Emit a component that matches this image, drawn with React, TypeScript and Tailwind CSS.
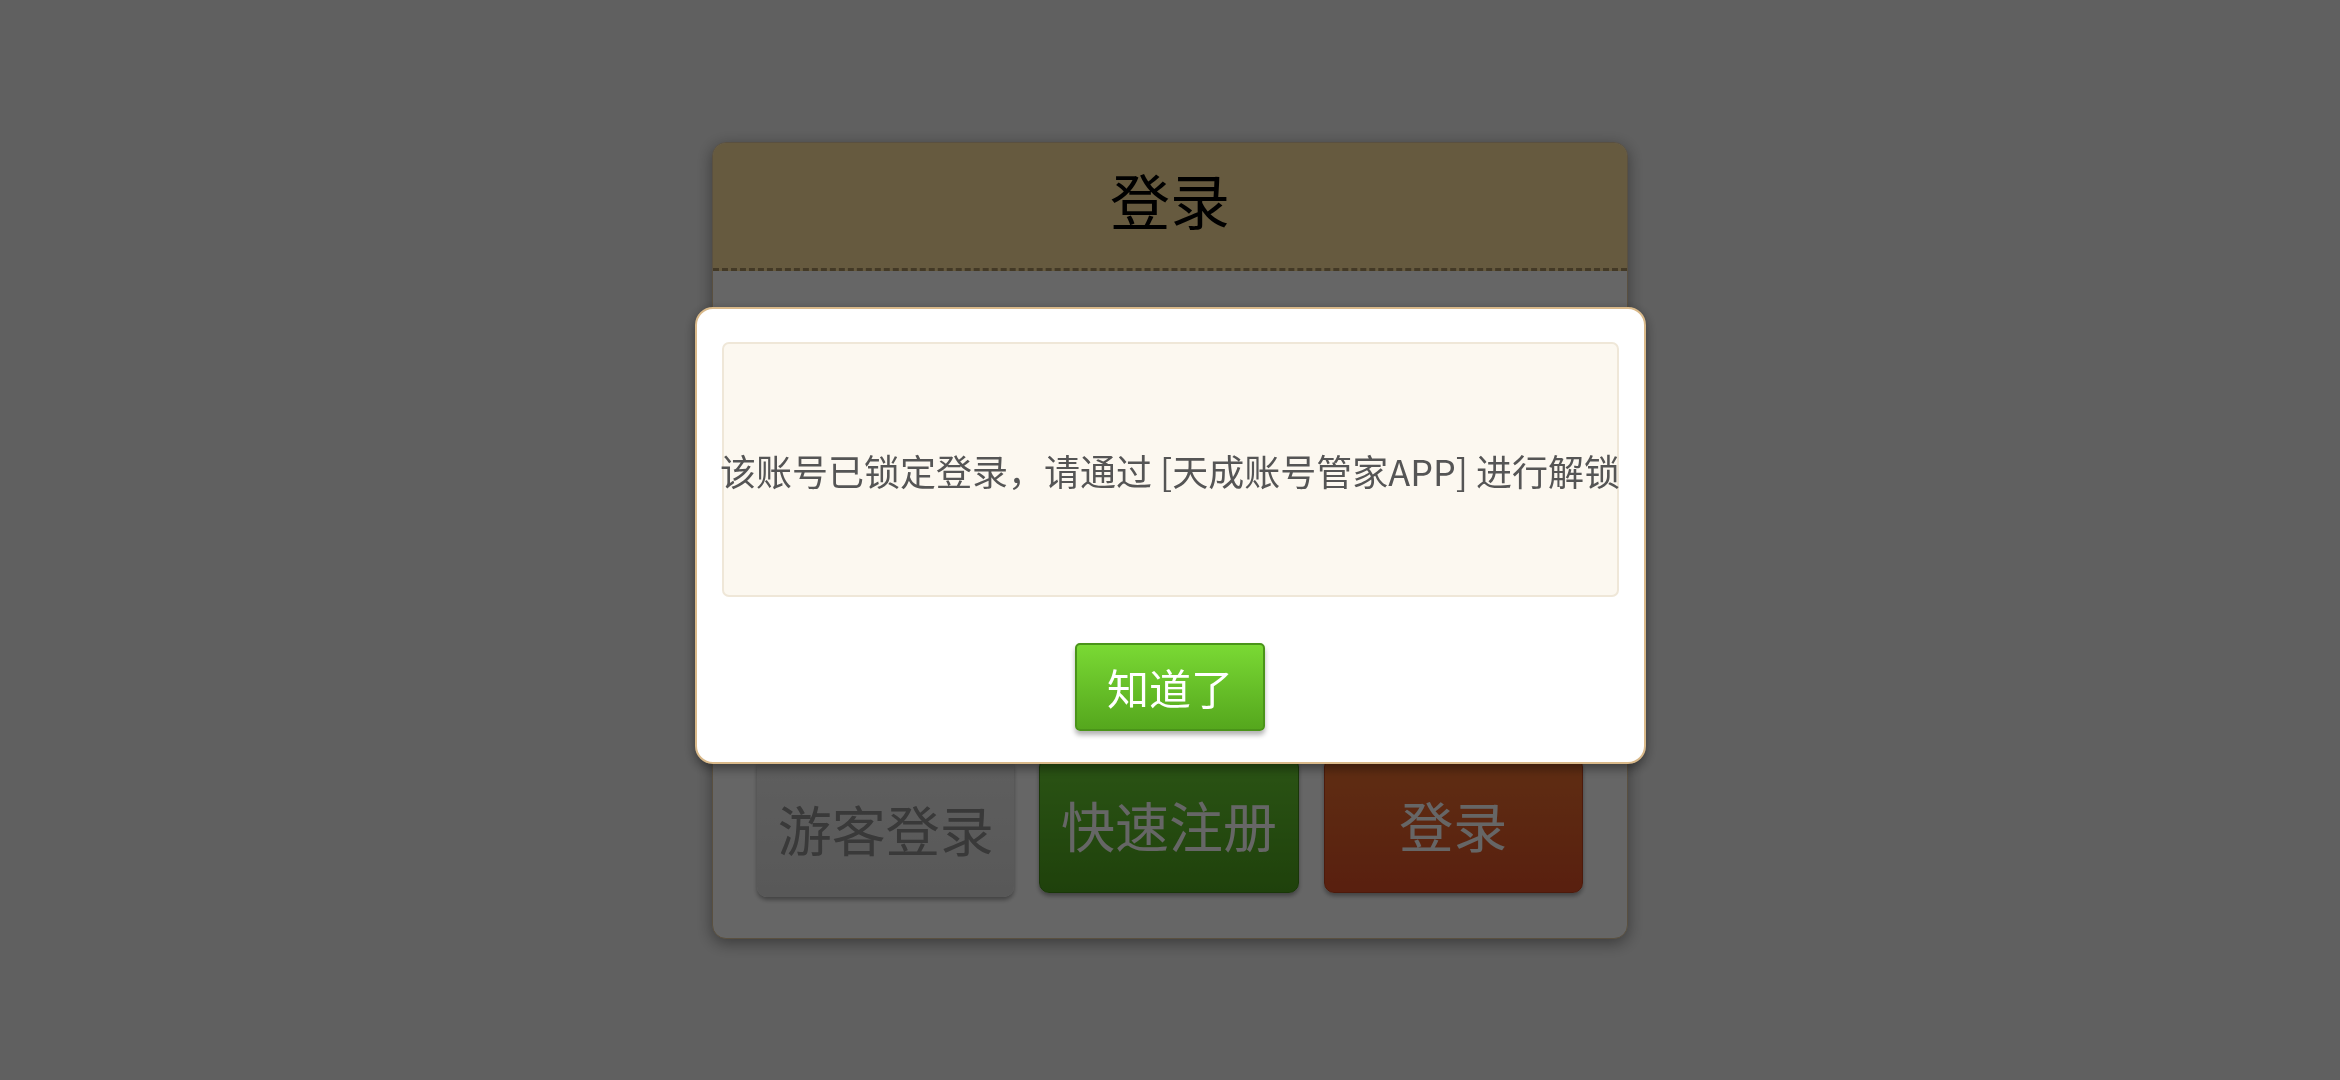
import { useState } from "react";

const font = { fontFamily: '"Noto Sans CJK SC", "Noto Sans", sans-serif' };

const btnBase =
  "flex-1 rounded-[10px] flex items-center justify-center text-[54px] leading-none shadow-[0_3px_4px_rgba(0,0,0,0.35)]";

export default function App() {
  const [open, setOpen] = useState(true);

  return (
    <div className="relative w-full h-[1080px] bg-[#f0f0f0] flex items-center justify-center" style={font}>
      {/* login card */}
      <div className="w-[916px] h-[797px] bg-white rounded-[14px] border border-[#e2c9a0] shadow-[0_4px_16px_rgba(0,0,0,0.4)] flex flex-col overflow-hidden">
        <div className="h-[128px] shrink-0 bg-[#ffe19e] border-b-[3px] border-dashed border-[#a8905f] flex items-center justify-center pb-[12px]">
          <h1 className="text-[60px] leading-none text-black">登录</h1>
        </div>
        <div className="flex-1 flex flex-col px-[44px] pt-[60px] pb-[41px]">
          <div className="flex flex-col gap-8 flex-1">
            <input className="h-[110px] rounded-lg border border-[#ddd] px-6 text-[40px]" placeholder="账号" />
            <input className="h-[110px] rounded-lg border border-[#ddd] px-6 text-[40px]" placeholder="密码" type="password" />
          </div>
          <div className="flex gap-[25px] items-start">
            <button className={`${btnBase} h-[140px] bg-gradient-to-b from-[#ececec] to-[#dcdcdc] text-[#8e8e8e] pt-[4px]`}>游客登录</button>
            <button className={`${btnBase} h-[136px] bg-gradient-to-b from-[#6bd234] to-[#4ea31d] border border-[#3f8a16] text-white`}>快速注册</button>
            <button className={`${btnBase} h-[136px] bg-gradient-to-b from-[#ee7230] to-[#de4f26] border border-[#c0431c] text-white`}>登录</button>
          </div>
        </div>
      </div>

      {open && (
        <div className="fixed inset-0 bg-black/60 flex items-center justify-center pb-[9px]">
          <div className="w-[951px] bg-white rounded-[18px] border-2 border-[#d9b98a] shadow-[0_4px_12px_rgba(0,0,0,0.45)] px-[25px] pt-[33px] pb-[31px] flex flex-col items-center">
            <div className="w-full h-[255px] bg-[#fcf8f0] border-2 border-[#efe7d8] rounded-[7px] flex items-center justify-center">
              <p className="text-[36px] leading-none text-[#555] whitespace-nowrap">该账号已锁定登录，请通过 [天成账号管家APP] 进行解锁</p>
            </div>
            <button
              onClick={() => setOpen(false)}
              className="mt-[46px] w-[190px] h-[88px] rounded-[5px] bg-gradient-to-b from-[#7ad934] to-[#55a71d] border-2 border-[#4a9419] text-white text-[42px] leading-none shadow-[0_4px_5px_rgba(0,0,0,0.3)]"
            >
              知道了
            </button>
          </div>
        </div>
      )}
    </div>
  );
}
